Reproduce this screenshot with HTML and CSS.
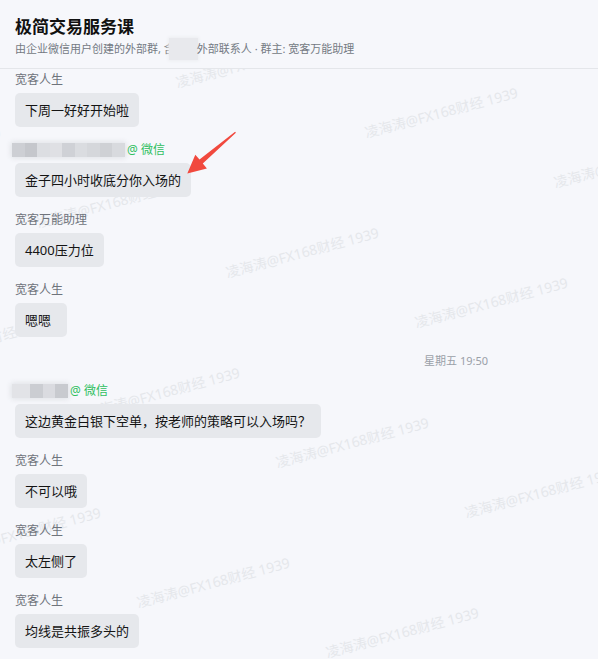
FILE: index.html
```html
<!DOCTYPE html>
<html lang="zh-CN">
<head>
<meta charset="utf-8">
<title>极简交易服务课</title>
<link rel="stylesheet" href="styles.css">
</head>
<body>
<div class="page">
  <header class="header">
    <h1 class="title">极简交易服务课</h1>
    <p class="subtitle">由企业微信用户创建的外部群, 含<span class="mask-box"></span>外部联系人 · 群主: 宽客万能助理</p>
  </header>

  <main class="chat">
    <div class="wm-layer" aria-hidden="true">
      <span class="wm" style="left:178px;top:7px">凌海涛@FX168财经 1939</span>
      <span class="wm" style="left:367px;top:57px">凌海涛@FX168财经 1939</span>
      <span class="wm" style="left:556px;top:107px">凌海涛@FX168财经 1939</span>
      <span class="wm" style="left:-150px;top:97px">凌海涛@FX168财经 1939</span>
      <span class="wm" style="left:39px;top:147px">凌海涛@FX168财经 1939</span>
      <span class="wm" style="left:228px;top:197px">凌海涛@FX168财经 1939</span>
      <span class="wm" style="left:417px;top:247px">凌海涛@FX168财经 1939</span>
      <span class="wm" style="left:-100px;top:287px">凌海涛@FX168财经 1939</span>
      <span class="wm" style="left:89px;top:337px">凌海涛@FX168财经 1939</span>
      <span class="wm" style="left:278px;top:387px">凌海涛@FX168财经 1939</span>
      <span class="wm" style="left:467px;top:437px">凌海涛@FX168财经 1939</span>
      <span class="wm" style="left:-50px;top:477px">凌海涛@FX168财经 1939</span>
      <span class="wm" style="left:139px;top:527px">凌海涛@FX168财经 1939</span>
      <span class="wm" style="left:328px;top:577px">凌海涛@FX168财经 1939</span>
    </div>

    <div class="msgs">
      <div class="msg">
        <div class="name">宽客人生</div>
        <div class="bubble">下周一好好开始啦</div>
      </div>
      <div class="msg">
        <div class="name">
          <span class="mask mask-long">
            <i class="b1"></i><i class="b2"></i><i class="b3"></i><i class="b4"></i><i class="b5"></i><i class="b6"></i><i class="b7"></i><i class="b8"></i><i class="b9"></i>
          </span>
          <span class="wx">@ 微信</span>
        </div>
        <div class="bubble">金子四小时收底分你入场的</div>
      </div>
      <div class="msg">
        <div class="name">宽客万能助理</div>
        <div class="bubble">4400压力位</div>
      </div>
      <div class="msg">
        <div class="name">宽客人生</div>
        <div class="bubble">嗯嗯</div>
      </div>
      <div class="time">星期五 19:50</div>
      <div class="msg">
        <div class="name">
          <span class="mask mask-short">
            <i class="c1"></i><i class="c2"></i><i class="c3"></i><i class="c4"></i>
          </span>
          <span class="wx">@ 微信</span>
        </div>
        <div class="bubble">这边黄金白银下空单，按老师的策略可以入场吗？</div>
      </div>
      <div class="msg">
        <div class="name">宽客人生</div>
        <div class="bubble">不可以哦</div>
      </div>
      <div class="msg">
        <div class="name">宽客人生</div>
        <div class="bubble">太左侧了</div>
      </div>
      <div class="msg">
        <div class="name">宽客人生</div>
        <div class="bubble">均线是共振多头的</div>
      </div>
    </div>
  </main>

  <svg class="arrow" viewBox="185 130 52 46" width="52" height="46" aria-hidden="true">
    <polygon points="235.9,132.7 202.8,163.4 206.9,168.5 187.3,173.6 195.3,154.7 199.5,159.6 235.1,131.8" fill="#f1493e"/>
  </svg>
</div>
</body>
</html>
```

FILE: styles.css
```css
* { box-sizing: border-box; }

html, body {
  margin: 0;
  padding: 0;
  background: #f6f7fb;
}

body {
  font-family: "Noto Sans", "Noto Sans CJK SC", sans-serif;
  color: #1a1a1a;
  width: 598px;
  height: 659px;
  overflow: hidden;
}

.page {
  position: relative;
  width: 598px;
  height: 659px;
  display: flex;
  flex-direction: column;
}

.header {
  padding: 15px 15px 11px;
  border-bottom: 1px solid #e4e6ea;
  background: #f6f7fb;
  position: relative;
  z-index: 2;
}

.title {
  margin: 0;
  font-size: 17px;
  line-height: 24px;
  height: 24px;
  font-weight: 700;
  color: #111;
}

.subtitle {
  margin: 2px 0 0;
  font-size: 11px;
  line-height: 16px;
  height: 16px;
  color: #747a83;
  white-space: nowrap;
}

.mask-box {
  display: inline-block;
  width: 19px;
  height: 12px;
  margin-left: -1px;
  margin-right: 4px;
  vertical-align: -2px;
  background: #e8e9ed;
  box-shadow: 0 0 0 5px #e8e9ed, 0 0 3px 6px #eceef1;
}

.chat {
  position: relative;
  flex: 1;
  overflow: hidden;
}

.wm-layer {
  position: absolute;
  inset: 0;
  z-index: 0;
  pointer-events: none;
}

.wm {
  position: absolute;
  font-size: 14px;
  line-height: 14px;
  color: #e5e7eb;
  white-space: nowrap;
  transform: rotate(-15deg);
  transform-origin: 0 100%;
}

.msgs {
  position: relative;
  z-index: 1;
  padding: 4px 15px 0;
  display: flex;
  flex-direction: column;
  align-items: flex-start;
  gap: 16px;
}

.msg {
  display: flex;
  flex-direction: column;
  align-items: flex-start;
  gap: 6px;
}

.name {
  font-size: 12px;
  line-height: 14px;
  height: 14px;
  color: #6f747c;
  display: flex;
  align-items: center;
  gap: 2px;
}

.bubble {
  background: #e6e8ec;
  border-radius: 5px;
  padding: 8px 10px;
  font-size: 13px;
  line-height: 18px;
  color: #141414;
  min-width: 52px;
  white-space: nowrap;
}

.wx {
  color: #2fbf5f;
  font-size: 12px;
}

.mask {
  display: flex;
  height: 14px;
  margin-left: -3px;
  border-radius: 3px;
  box-shadow: 0 0 4px 2px rgba(226, 228, 233, 0.9);
}

.mask i {
  display: block;
  width: 12.5px;
  height: 14px;
}

.mask-long { width: 113px; }
.mask-short { width: 56px; }

.b1 { background: #cdcfd4; }
.b2 { background: #c5c7cc; }
.b3 { background: #dcdee2; }
.b4 { background: #dfe0e4; }
.b5 { background: #cfd1d6; }
.b6 { background: #dadce0; }
.b7 { background: #d5d7db; }
.b8 { background: #cfd1d5; }
.b9 { background: #d8dade; }

.c1 { background: #e2e3e7; width: 18px !important; }
.c2 { background: #cbcdd2; }
.c3 { background: #dadbe0; }
.c4 { background: #c8cacf; }

.time {
  align-self: flex-end;
  margin-right: 95px;
  margin-top: 1px;
  margin-bottom: 0;
  font-size: 11px;
  line-height: 14px;
  color: #9aa0a8;
}

.arrow {
  position: absolute;
  left: 185px;
  top: 130px;
  z-index: 3;
}
```
